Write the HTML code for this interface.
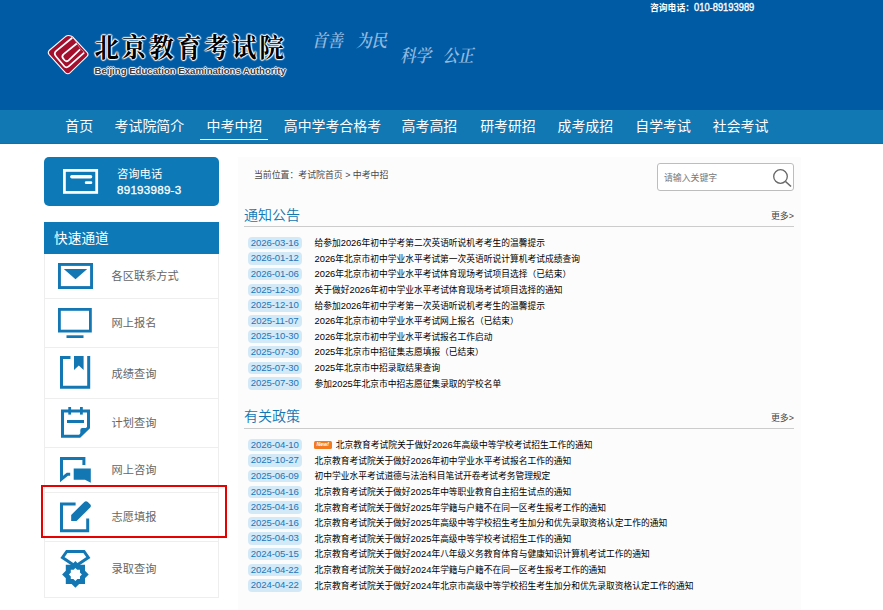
<!DOCTYPE html>
<html lang="zh-CN">
<head>
<meta charset="utf-8">
<title>中考中招 - 北京教育考试院</title>
<style>
html,body{margin:0;padding:0;}
body{width:883px;height:610px;overflow:hidden;position:relative;background:#fff;
  font-family:"Liberation Sans","Noto Sans CJK SC",sans-serif;color:#000;}
.abs{position:absolute;white-space:nowrap;}
#hdr{position:absolute;left:0;top:0;width:883px;height:110px;background:#005ba4;}
#nav{position:absolute;left:0;top:110px;width:883px;height:34px;background:#1278b4;box-shadow:inset 0 -1px 0 #0e70ad;}
#nav span{position:absolute;top:0;height:34px;line-height:32px;color:#fff;font-size:13.9px;white-space:nowrap;}
#tel{left:650px;top:2.4px;font-size:8.8px;line-height:13px;color:#fff;font-weight:bold;}
#tel b{font-weight:normal;font-size:9.35px;-webkit-text-stroke:0.3px #fff;display:inline-block;transform:scaleY(1.1);transform-origin:0 60%;}
#logo-cn{left:94.5px;top:31.5px;font-family:"Liberation Serif","Noto Serif CJK SC",serif;font-weight:700;font-size:24.4px;line-height:34px;letter-spacing:3.1px;color:#000;
  transform:scaleY(1.09);transform-origin:0 85%;
  text-shadow:0 0 1px #fff,0 0 1px #fff,0 0 2px #fff,0 0 2px #fff,1px 0 1px #fff,-1px 0 1px #fff,0 1px 1px #fff,0 -1px 1px #fff;}
#logo-en{left:94.5px;top:64px;font-size:9.62px;line-height:14px;color:#3c3c3c;font-weight:bold;
  text-shadow:0 0 1px #fff,0 0 1px #fff,0 0 1px #fff,1px 0 1px #fff,-1px 0 1px #fff,0 1px 1px #fff,0 -1px 1px #fff;}
.slogan{font-family:"Liberation Serif","Noto Serif CJK SC",serif;font-style:italic;font-size:15.5px;line-height:20px;color:#93b9de;letter-spacing:0px;font-weight:600;transform:scaleY(1.15);transform-origin:0 50%;}
#panel{position:absolute;left:238px;top:157px;width:563px;height:453px;background:#fcfcfc;}
#telbox{position:absolute;left:44px;top:157px;width:175px;height:49px;background:#0d79b6;border-radius:5px;}
#telbox .t{position:absolute;left:73px;color:#fff;font-size:11.5px;line-height:16px;white-space:nowrap;}
#qh{position:absolute;left:44px;top:222px;width:175px;height:32px;background:#0d79b6;color:#fff;font-size:13.7px;line-height:33px;}
#ql{position:absolute;left:44px;top:254px;width:173px;height:343px;border:1px solid #eee;border-top:none;}
.sep{position:absolute;left:45px;width:173px;height:1px;background:#eee;}
.qt{position:absolute;left:111.6px;font-size:11.2px;line-height:16px;color:#666;white-space:nowrap;}
.ico{position:absolute;}
#red{position:absolute;left:41px;top:485px;width:182px;height:49px;border:2px solid #e60000;}
.bc{left:254px;top:168px;font-size:8.9px;line-height:14px;color:#4a4a4a;}
.h2{font-size:14px;line-height:20px;color:#1177b3;font-weight:350;}
.more{font-size:8.9px;line-height:14px;color:#444;}
.hr{position:absolute;left:244px;width:550px;height:1px;background:#ccc;}
.row{position:absolute;left:248px;height:12px;white-space:nowrap;}
.row .d{position:absolute;left:0;top:-0.3px;width:53.5px;height:12.3px;border-radius:4px;background:#d4e9f8;color:#1b76b6;font-size:9.6px;letter-spacing:-0.1px;line-height:12px;text-align:center;}
.row .x{position:absolute;left:66.5px;top:-0.9px;font-size:8.74px;line-height:14px;color:#000;}
.row .x b{font-weight:normal;font-size:9.35px;}
.new{display:inline-block;vertical-align:2px;background:#f47a20;color:#fff;font-size:5.2px;line-height:7.6px;height:7.6px;width:17.5px;text-align:center;border-radius:1.5px;font-style:italic;font-weight:bold;margin-right:4.3px;margin-left:-0.5px;}
#search{position:absolute;left:657px;top:163px;width:135px;height:26px;border:1px solid #bdbdbd;border-radius:3px;background:#fff;}
#search span{position:absolute;left:6px;top:7px;font-size:8.9px;line-height:14px;color:#777;}
</style>
</head>
<body>
<div id="hdr">
  <div class="abs" id="tel">咨询电话：<b>010-89193989</b></div>
  <svg class="ico" style="left:44px;top:30px" width="50" height="50" viewBox="0 0 610 610">
    <path d="M62,250 L262,80 Q290,60 328,72 L352,86 L528,275 Q548,300 525,322 L320,520 Q290,547 260,520 L62,300 Q42,275 62,250 Z" fill="#a30f2d" stroke="#fff" stroke-width="13" stroke-linejoin="round"/>
    <path d="M345,95 L150,255 Q115,285 145,320 L245,440 Q270,470 305,440 L490,275" fill="none" stroke="#fff" stroke-width="21"/>
    <path d="M400,165 L240,295 Q210,320 235,350 L255,372 Q275,392 300,370 L440,235" fill="none" stroke="#fff" stroke-width="21"/>
    <path d="M352,88 L402,162 L442,225 L492,270" fill="none" stroke="#fff" stroke-width="8" opacity="0.6"/>
  </svg>
  <div class="abs" id="logo-cn">北京教育考试院</div>
  <div class="abs" id="logo-en">Beijing Education Examinations Authority</div>
  <div class="abs slogan" style="left:312px;top:30.5px">首善</div>
  <div class="abs slogan" style="left:356px;top:30.5px">为民</div>
  <div class="abs slogan" style="left:400px;top:45.5px">科学</div>
  <div class="abs slogan" style="left:442.5px;top:46px">公正</div>
</div>
<div id="nav">
  <span style="left:65.3px">首页</span>
  <span style="left:114.6px">考试院简介</span>
  <span style="left:206.6px">中考中招</span>
  <span style="left:283.8px">高中学考合格考</span>
  <span style="left:401.6px">高考高招</span>
  <span style="left:480.2px">研考研招</span>
  <span style="left:557.5px">成考成招</span>
  <span style="left:635.3px">自学考试</span>
  <span style="left:712.8px">社会考试</span>
  <div style="position:absolute;left:200px;top:29px;width:67.5px;height:1px;background:#fff"></div>
</div>

<div id="panel"></div>

<!-- sidebar -->
<div id="telbox">
  <svg class="ico" style="left:19px;top:11.9px" width="36" height="25" viewBox="0 0 36 25">
    <rect x="1.4" y="1.4" width="32.3" height="22" fill="none" stroke="#fff" stroke-width="2.8"/>
    <rect x="7.1" y="6" width="22.2" height="3.6" rx="1.8" fill="#fff"/>
    <rect x="21.8" y="12.3" width="7.5" height="2.7" rx="1.35" fill="#fff"/>
  </svg>
  <div class="t" style="top:9px;font-size:11.3px">咨询电话</div>
  <div class="t" style="top:25px;font-size:11.6px;letter-spacing:0.25px;-webkit-text-stroke:0.3px #fff">89193989-3</div>
</div>
<div id="qh"><span style="margin-left:10px">快速通道</span></div>
<div id="ql"></div>
<div class="sep" style="top:298px"></div>
<div class="sep" style="top:347px"></div>
<div class="sep" style="top:398px"></div>
<div class="sep" style="top:447px"></div>
<div class="sep" style="top:492px"></div>
<div class="sep" style="top:541px"></div>

<!-- icons -->
<svg class="ico" style="left:58px;top:263px" width="35" height="26" viewBox="0 0 35 26">
  <rect x="1.45" y="1.45" width="32.1" height="23.1" fill="none" stroke="#1377b4" stroke-width="2.9"/>
  <path d="M5.8,6 H29.2 L17.5,16.2 Z" fill="#1377b4"/>
</svg>
<svg class="ico" style="left:58.3px;top:308px" width="34" height="31" viewBox="0 0 34 31">
  <rect x="1.4" y="1.4" width="31" height="21.7" fill="none" stroke="#1377b4" stroke-width="2.8"/>
  <rect x="8.5" y="27.3" width="17" height="2.7" fill="#1377b4"/>
</svg>
<svg class="ico" style="left:60.4px;top:356px" width="31" height="33" viewBox="0 0 31 33">
  <path d="M10.5,1.5 H1.5 V31.3 H28.7 V0" fill="none" stroke="#1377b4" stroke-width="3"/>
  <path d="M14,0 H23.6 V14 L18.8,9.5 L14,14 Z" fill="#1377b4"/>
</svg>
<svg class="ico" style="left:61px;top:407px" width="30" height="32" viewBox="0 0 30 32">
  <path d="M1.5,4.1 H27.5 V20.6 L18.6,29.3 H1.5 Z" fill="none" stroke="#1377b4" stroke-width="3"/>
  <path d="M19.3,29.5 V23 Q19.3,21 21.3,21 H28 Z" fill="#1377b4"/>
  <rect x="7.3" y="0" width="2.8" height="7.6" fill="#1377b4"/>
  <rect x="19" y="0" width="2.8" height="7.6" fill="#1377b4"/>
  <rect x="6" y="13" width="17" height="3" fill="#1377b4"/>
</svg>
<svg class="ico" style="left:59.9px;top:457px" width="32" height="27" viewBox="0 0 32 27">
  <path d="M23.9,8 V1.5 H1.5 V22 L7.3,17.3 H10.2" fill="none" stroke="#1377b4" stroke-width="3"/>
  <path d="M13.7,11.5 H30.8 V25.8 L25,22.7 H13.7 Z" fill="#1377b4"/>
</svg>
<svg class="ico" style="left:59.9px;top:499.5px" width="32" height="33" viewBox="0 0 32 33">
  <path d="M15.6,3.9 H1.5 V30.8 H27.7 V18.5" fill="none" stroke="#1377b4" stroke-width="3"/>
  <path d="M11.2,15 L24.3,1.9 Q26,0.4 27.8,1.9 L30.1,4.2 Q31.6,5.9 30.1,7.6 L16.6,21.1 H11.2 Z" fill="#1377b4"/>
</svg>
<svg class="ico" style="left:59px;top:549px" width="33" height="40" viewBox="0 0 33 40">
  <path d="M7.8,2.4 H25 L29.3,8.5 L16.4,17.2 L3.5,8.5 Z" fill="none" stroke="#1377b4" stroke-width="3" stroke-linejoin="miter"/>
  <path d="M6.8,15.8 H26 V35 H6.8 Z M16.4,12.1 L29.7,25.4 L16.4,38.7 L3.1,25.4 Z" fill="#1377b4"/>
  <path d="M11.8,20.8 H21 V30 H11.8 Z M16.4,18.9 L22.9,25.4 L16.4,31.9 L9.9,25.4 Z" fill="#fff"/>
</svg>

<div class="qt" style="top:268px">各区联系方式</div>
<div class="qt" style="top:315px">网上报名</div>
<div class="qt" style="top:365.5px">成绩查询</div>
<div class="qt" style="top:415px">计划查询</div>
<div class="qt" style="top:462px">网上咨询</div>
<div class="qt" style="top:509px">志愿填报</div>
<div class="qt" style="top:560.5px">录取查询</div>
<div id="red"></div>

<!-- main -->
<div class="abs bc">当前位置：考试院首页 &gt; 中考中招</div>
<div id="search"><span>请输入关键字</span>
  <svg class="ico" style="left:114px;top:4px" width="20" height="20" viewBox="0 0 20 20">
    <circle cx="8.5" cy="8.5" r="6.8" fill="none" stroke="#666" stroke-width="1.3"/>
    <path d="M13.5,13.5 L19,18.5" stroke="#666" stroke-width="1.6" fill="none"/>
  </svg>
</div>

<div class="abs h2" style="left:244px;top:205px">通知公告</div>
<div class="abs more" style="left:771px;top:209px">更多&gt;</div>
<div class="hr" style="top:226px"></div>

<div class="row" style="top:237.1px"><span class="d">2026-03-16</span><span class="x">给参加<b>2026</b>年初中学考第二次英语听说机考考生的温馨提示</span></div>
<div class="row" style="top:252.7px"><span class="d">2026-01-12</span><span class="x"><b>2026</b>年北京市初中学业水平考试第一次英语听说计算机考试成绩查询</span></div>
<div class="row" style="top:268.3px"><span class="d">2026-01-06</span><span class="x"><b>2026</b>年北京市初中学业水平考试体育现场考试项目选择（已结束）</span></div>
<div class="row" style="top:283.9px"><span class="d">2025-12-30</span><span class="x">关于做好<b>2026</b>年初中学业水平考试体育现场考试项目选择的通知</span></div>
<div class="row" style="top:299.5px"><span class="d">2025-12-10</span><span class="x">给参加<b>2026</b>年初中学考第一次英语听说机考考生的温馨提示</span></div>
<div class="row" style="top:315.1px"><span class="d">2025-11-07</span><span class="x"><b>2026</b>年北京市初中学业水平考试网上报名（已结束）</span></div>
<div class="row" style="top:330.7px"><span class="d">2025-10-30</span><span class="x"><b>2026</b>年北京市初中学业水平考试报名工作启动</span></div>
<div class="row" style="top:346.3px"><span class="d">2025-07-30</span><span class="x"><b>2025</b>年北京市中招征集志愿填报（已结束）</span></div>
<div class="row" style="top:361.9px"><span class="d">2025-07-30</span><span class="x"><b>2025</b>年北京市中招录取结果查询</span></div>
<div class="row" style="top:377.5px"><span class="d">2025-07-30</span><span class="x">参加<b>2025</b>年北京市中招志愿征集录取的学校名单</span></div>

<div class="abs h2" style="left:244px;top:406px">有关政策</div>
<div class="abs more" style="left:771px;top:411px">更多&gt;</div>
<div class="hr" style="top:428px"></div>

<div class="row" style="top:439.1px"><span class="d">2026-04-10</span><span class="x"><i class="new">New!</i>北京教育考试院关于做好<b>2026</b>年高级中等学校考试招生工作的通知</span></div>
<div class="row" style="top:454.7px"><span class="d">2025-10-27</span><span class="x">北京教育考试院关于做好<b>2026</b>年初中学业水平考试报名工作的通知</span></div>
<div class="row" style="top:470.3px"><span class="d">2025-06-09</span><span class="x">初中学业水平考试道德与法治科目笔试开卷考试考务管理规定</span></div>
<div class="row" style="top:485.9px"><span class="d">2025-04-16</span><span class="x">北京教育考试院关于做好<b>2025</b>年中等职业教育自主招生试点的通知</span></div>
<div class="row" style="top:501.5px"><span class="d">2025-04-16</span><span class="x">北京教育考试院关于做好<b>2025</b>年学籍与户籍不在同一区考生报考工作的通知</span></div>
<div class="row" style="top:517.1px"><span class="d">2025-04-16</span><span class="x">北京教育考试院关于做好<b>2025</b>年高级中等学校招生考生加分和优先录取资格认定工作的通知</span></div>
<div class="row" style="top:532.7px"><span class="d">2025-04-03</span><span class="x">北京教育考试院关于做好<b>2025</b>年高级中等学校考试招生工作的通知</span></div>
<div class="row" style="top:548.3px"><span class="d">2024-05-15</span><span class="x">北京教育考试院关于做好<b>2024</b>年八年级义务教育体育与健康知识计算机考试工作的通知</span></div>
<div class="row" style="top:563.9px"><span class="d">2024-04-22</span><span class="x">北京教育考试院关于做好<b>2024</b>年学籍与户籍不在同一区考生报考工作的通知</span></div>
<div class="row" style="top:579.5px"><span class="d">2024-04-22</span><span class="x">北京教育考试院关于做好<b>2024</b>年北京市高级中等学校招生考生加分和优先录取资格认定工作的通知</span></div>

</body>
</html>
